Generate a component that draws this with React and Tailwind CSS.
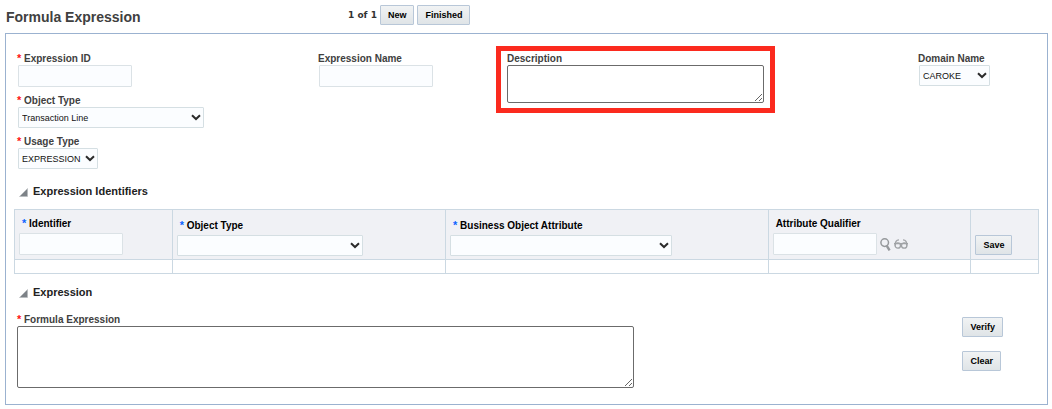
const Star = ({ blue }) => (
  <span
    aria-hidden="true"
    className={`w-[7px] shrink-0 text-[11px] leading-[10px] ${blue ? "text-[#0a64ff]" : "text-[#ff1414]"}`}
  >
    *
  </span>
);

const Label = ({ id, required, children }) => (
  <label htmlFor={id} className="flex text-[10px] leading-3 font-bold whitespace-nowrap text-[#404040]">
    {required && <Star />}
    {children}
  </label>
);

const HeadLabel = ({ id, required, children }) => (
  <label htmlFor={id} className="mb-[3px] flex pl-[3px] text-[10px] leading-3 font-bold whitespace-nowrap text-black">
    {required && <Star blue />}
    {children}
  </label>
);

const TextInput = ({ id, className }) => (
  <input
    id={id}
    type="text"
    className={`block rounded-[1px] border border-[#dbe2e6] bg-[#fbfdff] px-1 text-[10px] ${className}`}
  />
);

const Select = ({ id, className, options = [""] }) => (
  <div className={`relative max-w-full ${className}`}>
    <select
      id={id}
      className="block h-[21px] w-full appearance-none rounded-[1px] border border-[#d5dfe3] bg-[#fbfdff] pl-[3px] text-[9px] leading-4 text-[#111]"
    >
      {options.map((option) => (
        <option key={option}>{option}</option>
      ))}
    </select>
    <svg
      viewBox="0 0 10 7"
      className="pointer-events-none absolute top-[7px] right-[3px] h-[7px] w-[10px]"
      fill="none"
      stroke="#2b2b2b"
      strokeWidth="2"
    >
      <path d="M1 1.2 L5 5 L9 1.2" />
    </svg>
  </div>
);

const Button = ({ children }) => (
  <button
    type="button"
    className="h-5 rounded-[1px] border border-[#b8c7d8] bg-linear-to-b from-[#f1f3f4] to-[#dfe4e7] px-[7px] text-[9px] leading-4 font-bold whitespace-nowrap text-black"
  >
    {children}
  </button>
);

const SectionHeading = ({ children }) => (
  <h2 className="flex items-center gap-[5px] pl-[5px] text-[11px] leading-4 font-bold text-[#222]">
    <svg viewBox="0 0 9 9" className="mt-[2px] h-[9px] w-[9px]">
      <path d="M8.5 0.5 V8.5 H0.5 Z" fill="#7d8287" stroke="#b5b9bc" strokeWidth="0.6" />
    </svg>
    {children}
  </h2>
);

const SearchIcon = () => (
  <svg viewBox="0 0 11 13" className="h-[13px] w-[11px]" fill="none" stroke="#96999c">
    <circle cx="4.7" cy="4.6" r="3.8" strokeWidth="1.5" />
    <path d="M6.8 7.8 L9.6 12.4" strokeWidth="2.4" />
  </svg>
);

const GlassesIcon = () => (
  <svg viewBox="0 0 14 10" className="h-[10px] w-[14px]" fill="none" stroke="#a0a3a6" strokeWidth="1.3">
    <circle cx="3.8" cy="6.5" r="2.7" />
    <circle cx="10.2" cy="6.5" r="2.7" />
    <path d="M1.1 6.5 C1.1 3 2.2 0.9 5 0.9 M12.9 6.5 C12.9 3 11.8 0.9 9 0.9" />
    <path d="M0 4.6 H14" />
  </svg>
);

const App = () => {
  const cell = "border border-[#cbd8e2]";
  const head = `${cell} h-[50px] px-1 align-bottom text-left font-normal`;

  return (
    <div className="bg-white pt-[5px] pr-1 pb-[3px] pl-[5px] font-['Liberation_Sans',Arial,sans-serif]">
      <header className="flex h-7 items-start">
        <h1 className="w-[343px] pt-[2px] pl-px text-[14px] leading-5 font-bold text-[#404040]">
          Formula Expression
        </h1>
        <div className="flex items-center gap-[3px]">
          <span className="text-[9px] leading-5 font-bold text-[#333] font-['DejaVu_Sans',Verdana,sans-serif]">
            1 of 1
          </span>
          <Button>New</Button>
          <Button>Finished</Button>
        </div>
      </header>

      <main className="border border-[#9bb2d0] px-2 pt-3 pb-4">
        <div className="grid grid-cols-[301fr_178fr_422fr_121fr] items-start pl-[3px]">
          <div className="space-y-2 pt-[7px]">
            <div>
              <Label id="expression-id" required>Expression ID</Label>
              <div className="pl-px">
                <TextInput id="expression-id" className="h-[22px] w-[114px]" />
              </div>
            </div>
            <div>
              <Label id="object-type" required>Object Type</Label>
              <div className="pl-px">
                <Select id="object-type" className="w-[186px]" options={["Transaction Line"]} />
              </div>
            </div>
            <div>
              <Label id="usage-type" required>Usage Type</Label>
              <div className="pl-px">
                <Select id="usage-type" className="w-20" options={["EXPRESSION"]} />
              </div>
            </div>
          </div>

          <div className="pt-[7px]">
            <Label id="expression-name">Expression Name</Label>
            <div className="pl-px">
              <TextInput id="expression-name" className="h-[22px] w-[114px]" />
            </div>
          </div>

          <div className="w-[279px] max-w-full border-[5px] border-[#fb2a1e] px-[6px] pt-[2px] pb-[5px]">
            <Label id="description">Description</Label>
            <textarea
              id="description"
              className="block h-[38px] w-full rounded-[2px] border border-[#6b6b6b] bg-white p-1 text-[10px]"
            />
          </div>

          <div className="pt-[7px]">
            <Label id="domain-name">Domain Name</Label>
            <div className="pl-px">
              <Select id="domain-name" className="w-[71px]" options={["CAROKE"]} />
            </div>
          </div>
        </div>

        <section className="mt-[14px]">
          <SectionHeading>Expression Identifiers</SectionHeading>
          <table className="mt-[10px] w-full table-fixed border-collapse">
            <colgroup>
              <col className="w-[15.4%]" />
              <col className="w-[26.7%]" />
              <col className="w-[31.5%]" />
              <col className="w-[19.8%]" />
              <col className="w-[6.6%]" />
            </colgroup>
            <thead className="bg-[#f0f1f5]">
              <tr>
                <th className={`${head} pb-1`}>
                  <HeadLabel id="identifier" required>Identifier</HeadLabel>
                  <TextInput id="identifier" className="h-[22px] w-[104px]" />
                </th>
                <th className={`${head} pb-[3px]`}>
                  <HeadLabel id="row-object-type" required>Object Type</HeadLabel>
                  <Select id="row-object-type" className="w-[186px]" />
                </th>
                <th className={`${head} pb-[3px]`}>
                  <HeadLabel id="business-attribute" required>Business Object Attribute</HeadLabel>
                  <Select id="business-attribute" className="w-[222px]" />
                </th>
                <th className={`${head} pb-1`}>
                  <HeadLabel id="attribute-qualifier">Attribute Qualifier</HeadLabel>
                  <div className="flex items-center">
                    <TextInput id="attribute-qualifier" className="h-[22px] w-[104px]" />
                    <button type="button" aria-label="Search" className="ml-[3px]">
                      <SearchIcon />
                    </button>
                    <button type="button" aria-label="View" className="ml-[3px]">
                      <GlassesIcon />
                    </button>
                  </div>
                </th>
                <th className={`${head} pb-1`}>
                  <Button>Save</Button>
                </th>
              </tr>
            </thead>
            <tbody>
              <tr className="h-[14px]">
                <td className={cell} />
                <td className={cell} />
                <td className={cell} />
                <td className={cell} />
                <td className={cell} />
              </tr>
            </tbody>
          </table>
        </section>

        <section className="mt-[10px]">
          <SectionHeading>Expression</SectionHeading>
          <div className="mt-[14px] flex items-start justify-between pr-9 pl-[3px]">
            <div className="w-[617px]">
              <Label id="formula" required>Formula Expression</Label>
              <textarea
                id="formula"
                className="block h-[62px] w-full rounded-[2px] border border-[#6b6b6b] bg-white p-1 text-[10px]"
              />
            </div>
            <div className="flex flex-col items-start gap-[14px] pt-[3px]">
              <Button>Verify</Button>
              <Button>Clear</Button>
            </div>
          </div>
        </section>
      </main>
    </div>
  );
};

export default App;
